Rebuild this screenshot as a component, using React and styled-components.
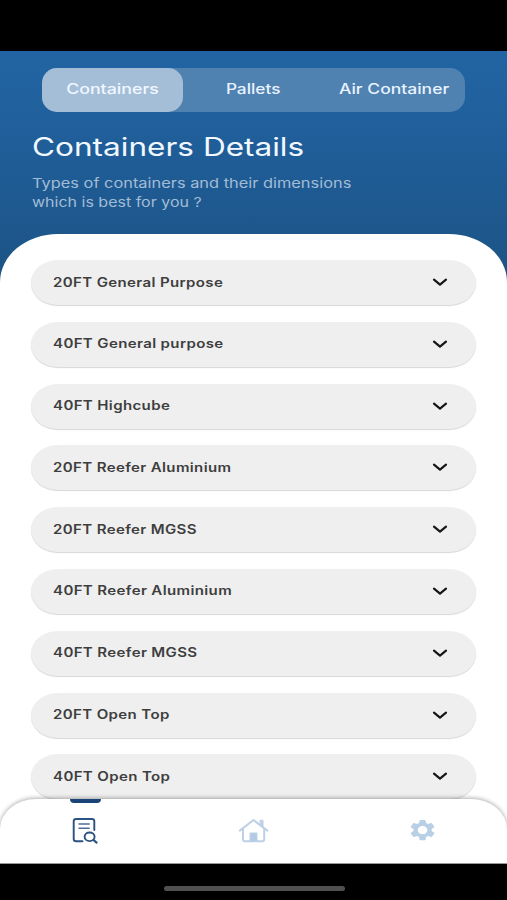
import React from "react";
import styled, { createGlobalStyle } from "styled-components";

const GlobalStyle = createGlobalStyle`
  * { box-sizing: border-box; }
  body { margin: 0; background: #000; font-family: "Inter", "Liberation Sans", sans-serif; }
`;

const Screen = styled.div`
  width: 507px;
  height: 900px;
  padding-top: 51px;
  display: flex;
  flex-direction: column;
  overflow: hidden;
  background: #000;
`;

const Main = styled.main`
  height: 748px;
  flex: none;
  overflow: hidden;
  background: linear-gradient(#2264a3 0, #205f9b 80px, #1c5384 230px);
`;

const Header = styled.header`
  height: 183px;
  padding: 17px 32px 0;
`;

const Segments = styled.nav`
  display: grid;
  grid-template-columns: repeat(3, 1fr);
  width: 423px;
  height: 44px;
  margin-left: 10px;
  border-radius: 15px;
  background: #4f81b1;
`;

const Segment = styled.button`
  display: flex;
  align-items: center;
  justify-content: center;
  padding: 0 0 3px;
  border: 0;
  border-radius: 15px;
  background: ${(p) => (p.$active ? "#a5bed7" : "transparent")};
  color: ${(p) => (p.$active ? "#f0f7ff" : "#e8f3ff")};
  font: 500 14px "Inter", sans-serif;
`;

const Wide = styled.span`
  display: inline-block;
  white-space: nowrap;
  transform: scaleX(${(p) => p.$stretch});
  transform-origin: ${(p) => p.$origin || "left"} center;
`;

const Title = styled.h1`
  margin: 18px 0 0;
  color: #f2f8ff;
  font-size: 25px;
  line-height: 34px;
  font-weight: 400;
`;

const Subtitle = styled.p`
  display: flex;
  flex-direction: column;
  margin: 10px 0 0;
  color: #a3bcd6;
  font-size: 13.5px;
  line-height: 19px;
`;

const Panel = styled.section`
  display: flex;
  flex-direction: column;
  gap: 16.8px;
  height: 600px;
  padding: 26px 31px 0;
  border-radius: 58px 58px 0 0 / 48px 48px 0 0;
  background: #fff;
`;

const Row = styled.button`
  flex: none;
  display: flex;
  align-items: center;
  justify-content: space-between;
  width: 445px;
  height: 45px;
  padding: 0 27.5px 1px 22px;
  border: 0;
  border-radius: 27px / 22.5px;
  background: #efefef;
  box-shadow: 0 1px 1px rgba(0, 0, 0, 0.16);
  color: #3e3e3e;
  font: 600 12.5px "Inter", sans-serif;
  letter-spacing: 0.3px;
`;

const Chevron = styled.svg`
  width: 18px;
  height: 12px;
  fill: none;
  stroke: #161616;
  stroke-width: 2.2;
  stroke-linecap: round;
  stroke-linejoin: round;
`;

const TabBar = styled.nav`
  position: relative;
  flex: none;
  display: grid;
  grid-template-columns: repeat(3, 1fr);
  height: 65px;
  border-bottom: 1px solid #999;
  border-radius: 36px 36px 0 0 / 30px 30px 0 0;
  background: #fff;
  box-shadow: 0 -1px 4px rgba(0, 0, 0, 0.32);
`;

/* White strip that continues the list surface behind the bar's round corners. */
const BarBacking = styled.div`
  flex: none;
  height: 65px;
  background: #fff;
`;

const Tab = styled.button`
  display: flex;
  flex-direction: column;
  align-items: center;
  padding: 0;
  border: 0;
  background: transparent;
`;

const Marker = styled.i`
  width: 31px;
  height: 4px;
  margin: 0 0 13px 1px;
  border-radius: 0 0 4px 4px;
  background: ${(p) => (p.$active ? "#1a4477" : "transparent")};
`;

const Icon = styled.svg`
  display: block;
  width: 32px;
  height: 28px;
  overflow: visible;
`;

const HomeIndicator = styled.div`
  flex: none;
  align-self: center;
  width: 181px;
  height: 5px;
  margin: 22px 0 0 1px;
  border-radius: 3px;
  background: #505050;
`;

const segments = [
  { label: "Containers", stretch: 1.27, active: true },
  { label: "Pallets", stretch: 1.23 },
  { label: "Air Container", stretch: 1.25 },
];

const rows = [
  "20FT General Purpose",
  "40FT General purpose",
  "40FT Highcube",
  "20FT Reefer Aluminium",
  "20FT Reefer MGSS",
  "40FT Reefer Aluminium",
  "40FT Reefer MGSS",
  "20FT Open Top",
  "40FT Open Top",
];

const SearchDocument = () => (
  <Icon viewBox="0 0 32 28" fill="none" stroke="#2b5280" strokeWidth="1.9" strokeLinecap="round" strokeLinejoin="round">
    <path d="M13.5 25.2H7.2Q4.7 25.2 4.7 22.9V5.3Q4.7 3 7.2 3H22.8Q25.3 3 25.3 5.3V14" />
    <path d="M10 8H20.2M10 12.2H20.2" strokeWidth="1.4" stroke="#526b96" />
    <ellipse cx="20.6" cy="20.8" rx="5" ry="4.3" />
    <path d="M24.5 24L27.6 26.6" strokeWidth="2.2" />
  </Icon>
);

const House = () => (
  <Icon viewBox="0 0 32 28" fill="none" stroke="#bdd0e5" strokeWidth="2" strokeLinecap="round" strokeLinejoin="round">
    <path d="M1.8 14.6L15.5 4L29.4 14.6" />
    <path d="M5 13V23.8Q5 25.2 6.5 25.2H24.7Q26.2 25.2 26.2 23.8V13" />
    <path d="M22.4 4.2H25V10.6L22.4 8.6Z" fill="#bdd0e5" strokeWidth="1" />
    <path d="M12 25V17H19V25Z" fill="#b5cae2" strokeWidth="1" />
  </Icon>
);

const Gear = () => (
  <Icon viewBox="0 0 32 28">
    <path
      transform="translate(.3 1.5) scale(1.27 1.05)"
      fill="#b9cfe6"
      fillRule="evenodd"
      d="M19.14 12.94c.04-.3.06-.61.06-.94s-.02-.64-.07-.94l2.03-1.58a.49.49 0 0 0 .12-.61l-1.92-3.32a.49.49 0 0 0-.59-.22l-2.39.96a7 7 0 0 0-1.62-.94l-.36-2.54a.48.48 0 0 0-.48-.41h-3.84a.48.48 0 0 0-.47.41l-.36 2.54a7 7 0 0 0-1.62.94l-2.39-.96a.49.49 0 0 0-.59.22L2.74 8.87a.49.49 0 0 0 .12.61l2.03 1.58a6 6 0 0 0 0 1.88l-2.03 1.58a.49.49 0 0 0-.12.61l1.92 3.32c.12.22.37.29.59.22l2.39-.96c.5.38 1.03.7 1.62.94l.36 2.54c.05.24.24.41.48.41h3.84c.24 0 .44-.17.47-.41l.36-2.54a7 7 0 0 0 1.62-.94l2.39.96c.22.08.47 0 .59-.22l1.92-3.32a.49.49 0 0 0-.12-.61ZM12 15.8a3.8 3.8 0 1 1 0-7.6 3.8 3.8 0 0 1 0 7.6Z"
    />
  </Icon>
);

export default function App() {
  return (
    <Screen>
      <GlobalStyle />
      <Main>
        <Header>
          <Segments>
            {segments.map((s) => (
              <Segment key={s.label} $active={s.active}>
                <Wide $stretch={s.stretch} $origin="center">{s.label}</Wide>
              </Segment>
            ))}
          </Segments>
          <Title><Wide $stretch={1.262}>Containers Details</Wide></Title>
          <Subtitle>
            <Wide $stretch={1.213}>Types of containers and their dimensions</Wide>
            <Wide $stretch={1.185}>which is best for you ?</Wide>
          </Subtitle>
        </Header>
        <Panel>
          {rows.map((label) => (
            <Row key={label}>
              <Wide $stretch={1.203}>{label}</Wide>
              <Chevron viewBox="0 0 18 12"><path d="M3 3.6L9 8.6L15 3.6" /></Chevron>
            </Row>
          ))}
        </Panel>
      </Main>
      <BarBacking>
        <TabBar>
          <Tab><Marker $active /><SearchDocument /></Tab>
          <Tab><Marker /><House /></Tab>
          <Tab><Marker /><Gear /></Tab>
        </TabBar>
      </BarBacking>
      <HomeIndicator />
    </Screen>
  );
}
